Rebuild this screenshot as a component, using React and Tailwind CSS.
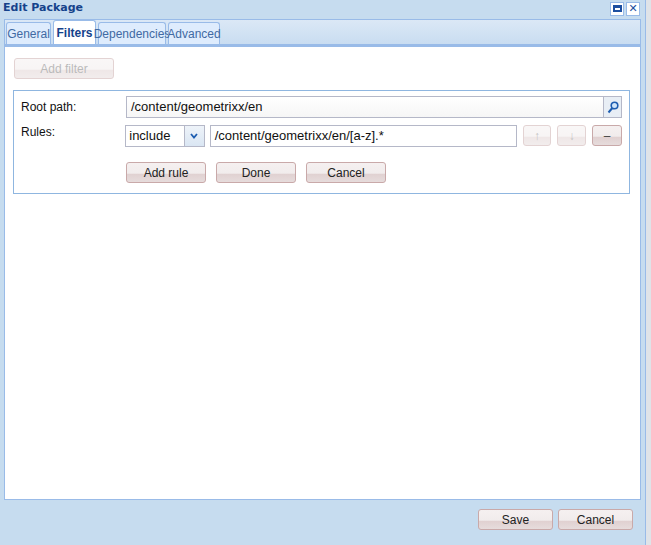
const btn = "h-[21px] rounded-[3px] border border-[#c9a9a9] bg-[linear-gradient(#f5f0f0_0%,#f1ecec_55%,#e0d0d0_56%,#e6dcdc_100%)] text-[12px] text-[#222] flex items-center justify-center";

function Btn({ className = "", children, disabled }) {
    return <div className={`${btn} ${disabled ? "opacity-50" : ""} ${className}`}>{children}</div>;
}

export default function App() {
    return (
        <div className="w-[651px] h-[545px] bg-[#dfe3e8] relative overflow-hidden" style={{ fontFamily: "Verdana, 'DejaVu Sans', sans-serif" }}>
            <div className="w-[646px] h-[545px] bg-[#c6dcef] border-r border-[#99bbe8] flex flex-col">
                {/* title bar */}
                <div className="h-[17px] flex items-center justify-between pl-[3px] pr-[5px]">
                    <span className="text-[11px] font-bold text-[#15428b]">Edit Package</span>
                    <div className="flex gap-[2px]">
                        <div className="w-[14px] h-[14px] bg-white border border-[#99bbe8] flex items-center justify-center">
                            <div className="w-[9px] h-[7px] border-2 border-[#1d4fa0] border-t-[3px]" />
                        </div>
                        <div className="w-[14px] h-[14px] bg-white border border-[#99bbe8] flex items-center justify-center text-[#1d4fa0] text-[11px] leading-none">✕</div>
                    </div>
                </div>
                {/* tabs */}
                <div className="mx-[4px] mt-[2px] h-[25px] border border-[#99bbe8] border-b-0 bg-[linear-gradient(#dbe8f6,#c9ddf1)] flex items-end pl-[1px] gap-[2px]" style={{ fontFamily: "'Liberation Sans', Arial, sans-serif" }}>
                    <div className="h-[22px] w-[45px] border border-[#99bbe8] border-b-0 rounded-t-[3px] bg-[#deecfd] text-[12px] text-[#416aa3] flex items-center justify-center">General</div>
                    <div className="h-[24px] w-[43px] border border-[#99bbe8] border-b-0 rounded-t-[3px] bg-white text-[12px] font-bold text-[#15428b] flex items-center justify-center">Filters</div>
                    <div className="h-[22px] w-[68px] border border-[#99bbe8] border-b-0 rounded-t-[3px] bg-[#deecfd] text-[12px] text-[#416aa3] flex items-center justify-center">Dependencies</div>
                    <div className="h-[22px] w-[52px] border border-[#99bbe8] border-b-0 rounded-t-[3px] bg-[#deecfd] text-[12px] text-[#416aa3] flex items-center justify-center">Advanced</div>
                </div>
                {/* panel */}
                <div className="mx-[4px] h-[456px] bg-white border border-[#99bbe8] border-t-[3px] border-t-[#99bbe8] px-[8px] pt-[11px]" style={{ fontFamily: "'Liberation Sans', Arial, sans-serif" }}>
                    <Btn disabled className="w-[100px] ml-[1px] text-[#777]">Add filter</Btn>
                    <div className="mt-[11px] w-[617px] h-[104px] border border-[#8fb6e0] px-[7px] pt-[5px]">
                        <div className="flex items-center h-[22px]">
                            <span className="w-[105px] text-[12px] text-[#111]">Root path:</span>
                            <div className="flex-1 flex h-[22px] border border-[#b5b8c8] bg-[linear-gradient(#fff,#f6f6f6)]">
                                <span className="flex-1 px-[4px] text-[13px] leading-[20px] text-[#111]">/content/geometrixx/en</span>
                                <div className="w-[18px] border-l border-[#b5b8c8] bg-[#e8eef5] flex items-center justify-center">
                                    <svg width="12" height="13" viewBox="0 0 12 13"><circle cx="7.5" cy="4.5" r="3.3" fill="#cfe5fa" stroke="#1d5db0" strokeWidth="1.6"/><path d="M5.3 7 L1.5 11.5" stroke="#1d5db0" strokeWidth="2"/></svg>
                                </div>
                            </div>
                        </div>
                        <div className="flex items-start mt-[7px] h-[22px]">
                            <span className="w-[105px] text-[12px] text-[#111] leading-[14px]">Rules:</span>
                            <div className="w-[80px] h-[22px] border border-[#b5b8c8] flex">
                                <span className="flex-1 px-[3px] text-[13px] leading-[20px] text-[#111]">include</span>
                                <div className="w-[20px] border-l border-[#b5b8c8] bg-[linear-gradient(#eef3f9,#dae6f3)] flex items-center justify-center">
                                    <svg width="8" height="6" viewBox="0 0 8 6"><path d="M1 1 L4 4.5 L7 1" fill="none" stroke="#1d5db0" strokeWidth="1.8"/></svg>
                                </div>
                            </div>
                            <div className="ml-[5px] w-[309px] h-[22px] border border-[#b5b8c8] px-[4px] text-[13px] leading-[20px] text-[#111]">/content/geometrixx/en/[a-z].*</div>
                            <Btn disabled className="ml-[6px] w-[29px] text-[#888]">↑</Btn>
                            <Btn disabled className="ml-[6px] w-[29px] text-[#888]">↓</Btn>
                            <Btn className="ml-[6px] w-[30px] text-[#444]">–</Btn>
                        </div>
                        <div className="flex ml-[105px] mt-[15px] gap-[10px]">
                            <Btn className="w-[80px]">Add rule</Btn>
                            <Btn className="w-[80px]">Done</Btn>
                            <Btn className="w-[80px]">Cancel</Btn>
                        </div>
                    </div>
                </div>
                {/* footer */}
                <div className="flex justify-end gap-[5px] pr-[12px] mt-[9px]" style={{ fontFamily: "'Liberation Sans', Arial, sans-serif" }}>
                    <Btn className="w-[75px]">Save</Btn>
                    <Btn className="w-[75px]">Cancel</Btn>
                </div>
            </div>
        </div>
    );
}
